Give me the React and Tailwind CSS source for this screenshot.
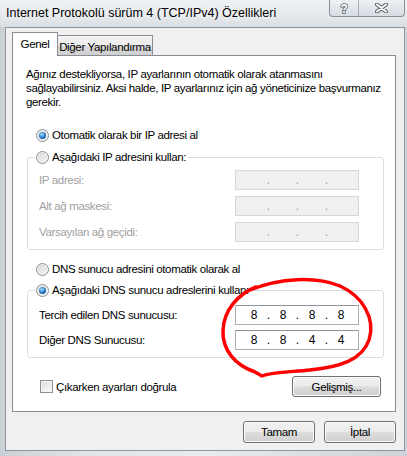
import React from "react";

const Radio = ({ checked }) => (
    <span className="flex h-[13px] w-[13px] shrink-0 items-center justify-center rounded-full border border-[#8e8f8f] bg-[linear-gradient(135deg,#d4d4d4,#f9f9f9)] shadow-[inset_0_0_0_1px_#f4f4f4]">
        {checked && (
            <span className="h-[7px] w-[7px] rounded-full bg-[radial-gradient(circle_at_40%_35%,#a9e2ff,#1e73c2_55%,#0b3f7c)]" />
        )}
    </span>
);

const IpBox = ({ parts, disabled }) => (
    <div
        className={
            disabled
                ? "flex h-[20px] w-[124px] items-center border border-[#d7d7d7] bg-[#f0f0f0] pl-[7px] text-[12px] tracking-normal text-[#9a9a9a]"
                : "flex h-[20px] w-[124px] items-center border border-[#abadb3] border-t-[#8f929a] bg-white pl-[7px] text-[12px] tracking-normal text-black"
        }
    >
        {parts.map((p, i) => (
            <React.Fragment key={i}>
                <span className="w-[22px] text-center">{p}</span>
                {i < 3 && <span className="w-[7px] text-center">.</span>}
            </React.Fragment>
        ))}
    </div>
);

const Btn = ({ children, className }) => (
    <button
        className={`flex items-center justify-center rounded-[3px] border border-[#707070] bg-[linear-gradient(#f2f2f2,#ebebeb_48%,#dddddd_52%,#cfcfcf)] text-black shadow-[inset_0_0_0_1px_#fbfbfb] ${className}`}
    >
        {children}
    </button>
);

const Row = ({ label, parts, disabled }) => (
    <div className="flex items-center justify-between">
        <span className={disabled ? "text-[#a0a0a0]" : "text-black"}>{label}</span>
        <IpBox parts={parts} disabled={disabled} />
    </div>
);

const empty = ["", "", "", ""];

export default function App() {
    return (
        <div className="relative flex h-[456px] w-[407px] flex-col overflow-hidden whitespace-nowrap bg-[linear-gradient(90deg,#c9d0d6,#dfe4e8_20%,#e9ecee_50%,#d8dde2_80%,#cdd3d8)] font-['Liberation_Sans',sans-serif] text-[11.5px] leading-[14px] tracking-[-0.35px] text-black">
            {/* Title bar */}
            <div className="flex h-[27px] shrink-0 items-start bg-[linear-gradient(#eef0f2,#e6e9ec_60%,#d9dee2)]">
                <span className="mt-[5px] pl-[6px] text-[12.5px] leading-[16px] tracking-normal text-black [text-shadow:0_0_6px_#ffffff]">
                    Internet Protokolü sürüm 4 (TCP/IPv4) Özellikleri
                </span>
                <div className="ml-auto mr-[2px] flex h-[17px] w-[76px] overflow-hidden rounded-b-[4px] border border-t-0 border-[#8a9097] bg-[linear-gradient(#eef1f4,#d6dce2)]">
                    <div className="flex w-[29px] items-center justify-center border-r border-[#a5abb1]">
                        <svg width="10" height="13" viewBox="0 0 10 13">
                            <text x="5" y="11" textAnchor="middle" fontSize="12" fontWeight="700" fontFamily="Liberation Sans, sans-serif" fill="#ffffff" stroke="#5d636a" strokeWidth="1.6" paintOrder="stroke">?</text>
                        </svg>
                    </div>
                    <div className="flex flex-1 items-center justify-center">
                        <svg width="13" height="10" viewBox="0 0 13 10">
                            <path d="M2 1.5 L11 8.5 M11 1.5 L2 8.5" stroke="#5d636a" strokeWidth="4" strokeLinecap="round" />
                            <path d="M2 1.5 L11 8.5 M11 1.5 L2 8.5" stroke="#ffffff" strokeWidth="2" strokeLinecap="round" />
                        </svg>
                    </div>
                </div>
            </div>

            {/* Dialog body */}
            <div className="ml-[5px] flex h-[424px] w-[400px] shrink-0 flex-col border border-[#8d969e] bg-[#f0f0f0] pl-[6px] pt-[4px]">
                {/* Tabs */}
                <div className="relative z-10 flex h-[24px] items-end">
                    <div className="flex h-[24px] w-[46px] items-start justify-center border border-b-0 border-[#898c95] bg-white pt-[4px]">
                        Genel
                    </div>
                    <div className="mb-[1px] flex h-[20px] w-[95px] items-center justify-center border border-l-0 border-b-0 border-[#898c95] bg-[linear-gradient(#f3f3f3,#ebebeb_50%,#dddddd_50%,#cfcfcf)] pt-[2px]">
                        Diğer Yapılandırma
                    </div>
                </div>

                {/* Tab panel */}
                <div className="-mt-[1px] flex h-[357px] w-[384px] flex-col border border-[#898c95] bg-white">
                    <p className="pl-[13px] pt-[11px] leading-[14px]">
                        Ağınız destekliyorsa, IP ayarlarının otomatik olarak atanmasını
                        <br />
                        sağlayabilirsiniz. Aksi halde, IP ayarlarınız için ağ yöneticinize başvurmanız
                        <br />
                        gerekir.
                    </p>

                    <div className="mt-[19px] flex h-[14px] items-center gap-[3px] pl-[23px]">
                        <Radio checked />
                        <span>Otomatik olarak bir IP adresi al</span>
                    </div>

                    <fieldset className="ml-[14px] mt-[8px] w-[357px] rounded-[3px] border border-[#d5dfe5] pb-[7px] pl-[11px] pr-[24px]">
                        <legend className="-ml-[4px] flex h-[14px] items-center gap-[3px] bg-white pl-[1px] pr-[2px]">
                            <Radio />
                            <span>Aşağıdaki IP adresini kullan:</span>
                        </legend>
                        <div className="mt-[6px] flex flex-col gap-[6px]">
                            <Row label="IP adresi:" parts={empty} disabled />
                            <Row label="Alt ağ maskesi:" parts={empty} disabled />
                            <Row label="Varsayılan ağ geçidi:" parts={empty} disabled />
                        </div>
                    </fieldset>

                    <div className="mt-[12px] flex h-[14px] items-center gap-[3px] pl-[23px]">
                        <Radio />
                        <span>DNS sunucu adresini otomatik olarak al</span>
                    </div>

                    <fieldset className="ml-[14px] mt-[7px] w-[357px] rounded-[3px] border border-[#d5dfe5] pb-[7px] pl-[11px] pr-[24px]">
                        <legend className="-ml-[4px] flex h-[14px] items-center gap-[3px] bg-white pl-[1px] pr-[2px]">
                            <Radio checked />
                            <span>Aşağıdaki DNS sunucu adreslerini kullan:</span>
                        </legend>
                        <div className="mt-[8px] flex flex-col gap-[5px]">
                            <Row label="Tercih edilen DNS sunucusu:" parts={["8", "8", "8", "8"]} />
                            <Row label="Diğer DNS Sunucusu:" parts={["8", "8", "4", "4"]} />
                        </div>
                    </fieldset>

                    <div className="mt-[18px] flex h-[21px] items-center pl-[27px] pr-[14px]">
                        <span className="h-[13px] w-[13px] shrink-0 border border-[#8e8f8f] bg-[linear-gradient(135deg,#dcdcdc,#fbfbfb)] shadow-[inset_0_0_0_1px_#f4f4f4]" />
                        <span className="ml-[3px]">Çıkarken ayarları doğrula</span>
                        <Btn className="ml-auto h-[21px] w-[89px]">Gelişmiş...</Btn>
                    </div>
                </div>

                {/* Bottom buttons */}
                <div className="mt-[9px] flex w-[384px] justify-end gap-[9px]">
                    <Btn className="h-[22px] w-[72px]">Tamam</Btn>
                    <Btn className="h-[22px] w-[72px]">İptal</Btn>
                </div>
            </div>

            {/* Red hand-drawn mark over the screenshot */}
            <svg className="pointer-events-none absolute inset-0" width="407" height="456" viewBox="0 0 407 456">
                <path
                    d="M256 287 C238 294 224 310 223 330 C222 350 235 365 255 372 L262 376 C272 372 290 372 310 370 C340 367 362 360 369 340 C376 318 362 296 340 286 C315 276 280 278 250 290"
                    fill="none"
                    stroke="#ff0000"
                    strokeWidth="3.5"
                    strokeLinecap="round"
                    strokeLinejoin="round"
                />
            </svg>
        </div>
    );
}
